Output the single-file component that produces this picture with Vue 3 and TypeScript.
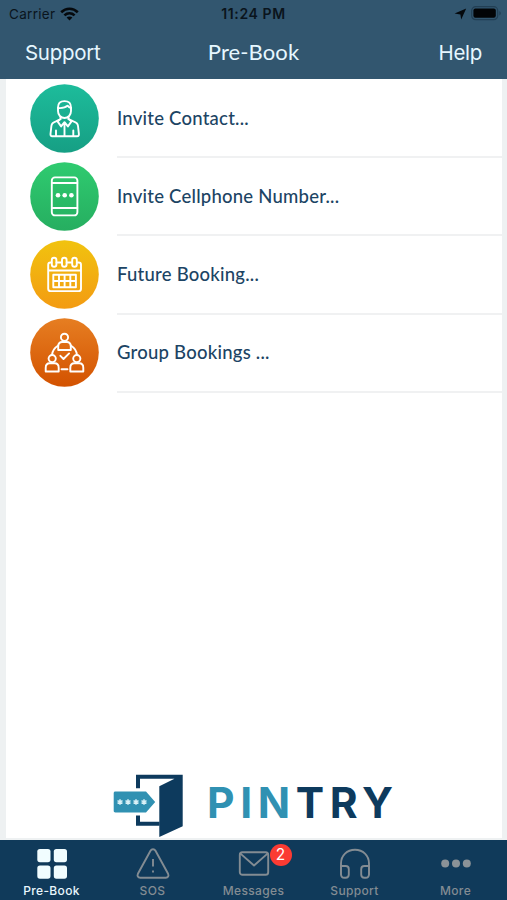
<script setup lang="ts">
interface MenuItem {
  id: string
  label: string
  from: string
  to: string
}

interface Tab {
  id: string
  label: string
  badge?: number
}

const items: MenuItem[] = [
  { id: 'contact', label: 'Invite Contact...', from: '#1dbc9b', to: '#169f84' },
  { id: 'phone', label: 'Invite Cellphone Number...', from: '#2fcb70', to: '#26ae60' },
  { id: 'calendar', label: 'Future Booking...', from: '#f1c30f', to: '#f39b12' },
  { id: 'group', label: 'Group Bookings ...', from: '#e67e22', to: '#d35200' },
]

const tabs: Tab[] = [
  { id: 'prebook', label: 'Pre-Book' },
  { id: 'sos', label: 'SOS' },
  { id: 'messages', label: 'Messages', badge: 2 },
  { id: 'support', label: 'Support' },
  { id: 'more', label: 'More' },
]

const active = 'prebook'
const stars = [7, 15, 23, 31]
</script>

<template>
  <div class="screen">
    <header class="top">
      <div class="status">
        <div class="carrier">
          <span>Carrier</span>
          <svg width="19" height="14" viewBox="0 0 19 14">
            <g fill="none" stroke="#05090d" stroke-width="2.6">
              <path d="M1.2 5.2C6 .6 13 .6 17.8 5.2" />
              <path d="M4.4 8.4c3-2.8 7.2-2.8 10.2 0" />
            </g>
            <path d="M9.5 13.6 6.6 10.6c1.6-1.5 4.2-1.5 5.8 0z" fill="#05090d" />
          </svg>
        </div>
        <div class="clock">11:24 PM</div>
        <div class="indicators">
          <svg width="13" height="12" viewBox="0 0 13 12">
            <path d="M12.2.4 7.2 11.6 6.4 6.4.6 5.6z" fill="#05090d" />
          </svg>
          <svg width="31" height="15" viewBox="0 0 31 15">
            <rect x=".7" y=".7" width="26" height="13" rx="4" fill="none" stroke="#223f54" stroke-width="1.2" />
            <rect x="2.4" y="2.6" width="22.4" height="9.2" rx="2" fill="#020406" />
            <path d="M28.4 5c1.9.8 1.9 3.600 0 4.400z" fill="#223f54" />
          </svg>
        </div>
      </div>
      <nav class="navbar">
        <span class="nav-left">Support</span>
        <span class="nav-title">Pre-Book</span>
        <span class="nav-right">Help</span>
      </nav>
    </header>

    <main class="sheet">
      <ul class="menu">
        <li v-for="item in items" :key="item.id" class="row">
          <svg class="row-icon" width="69" height="69" viewBox="0 0 69 69">
            <defs>
              <linearGradient :id="`fill-${item.id}`" x1="0" y1="0" x2="0" y2="1">
                <stop offset="0" :stop-color="item.from" />
                <stop offset="1" :stop-color="item.to" />
              </linearGradient>
            </defs>
            <circle cx="34.5" cy="34.5" r="34.3" :fill="`url(#fill-${item.id})`" />
            <g v-if="item.id === 'contact'" class="line">
              <path d="M28 23.500c0-4 2.600-6.400 6.500-6.400s6.500 2.400 6.500 6.400v3.500c0 4-2.800 7-6.500 7s-6.500-3-6.500-7z" />
              <path d="M28 24c4 .3 7.500-.3 9.500-2.300 1 1.300 2 2 3.500 2.300" />
              <path d="M30.500 33v2L26 37.400c-3 .9-4.300 2-4.600 4.600l-.9 8c-.1 1.400.4 2.200 1.800 2.200h24.800c1.400 0 1.900-.8 1.800-2.200L48 42c-.3-2.600-1.600-3.700-4.600-4.600L38.500 35v-2" />
              <path d="M30.500 35l-3 2.400 3.600 5 3.400-4.200 3.400 4.200 3.600-5-3-2.400M34.500 38.500v13.500M26 46.500v5.500M43.300 46.500v5.500" />
            </g>
            <g v-else-if="item.id === 'phone'">
              <g class="line">
                <rect x="21.8" y="15.4" width="25.6" height="38" rx="3.2" />
                <path d="M22 21h25.300M22 46h25.300" />
              </g>
              <circle cx="28" cy="33.3" r="2.3" fill="#fff" />
              <circle cx="34.7" cy="33.3" r="2.3" fill="#fff" />
              <circle cx="41.4" cy="33.3" r="2.3" fill="#fff" />
            </g>
            <g v-else-if="item.id === 'calendar'" class="line">
              <path d="M21.500 22.500h-1c-1.600 0-2.300.8-2.300 2.200v24c0 1.600.8 2.400 2.400 2.400h28c1.600 0 2.400-.8 2.400-2.400v-24c0-1.400-.7-2.200-2.300-2.200h-1M26.500 22.500h5M36.700 22.500h5M18.400 30.500h32.400" />
              <rect x="21.8" y="17.8" width="4.600" height="9" rx="2.3" />
              <rect x="32" y="17.8" width="4.600" height="9" rx="2.3" />
              <rect x="42.2" y="17.8" width="4.600" height="9" rx="2.3" />
              <path d="M23.300 34.800h22.600v12.400H23.300zM23.300 41h22.600M29 34.800v12.400M34.600 34.800v12.400M40.300 34.800v12.400" />
            </g>
            <g v-else class="line">
              <circle cx="34.5" cy="19.3" r="3.6" />
              <path d="M28.200 32v-3.400c0-3 1.600-4.600 4-4.600h4.600c2.400 0 4 1.600 4 4.600V32z" />
              <circle cx="22.2" cy="40.6" r="3.6" />
              <path d="M15.700 53.500v-3.600c0-3 1.600-4.600 4-4.600h5c2.400 0 4 1.600 4 4.600v3.600z" />
              <circle cx="46.8" cy="40.6" r="3.6" />
              <path d="M40.300 53.500v-3.600c0-3 1.600-4.600 4-4.600h5c2.400 0 4 1.600 4 4.600v3.600z" />
              <path d="M28.200 27.500c-3.600 2.300-5.800 5.600-6.200 9.300M40.800 27.500c3.600 2.300 5.800 5.600 6.200 9.300M31.500 51.300h6" />
              <path d="M30.400 37.800l3.100 3.200 5.600-5.600" />
            </g>
          </svg>
          <div class="row-body">{{ item.label }}</div>
        </li>
      </ul>

      <div class="brand">
        <svg width="71" height="64" viewBox="0 0 71 64">
          <path d="M23 14.300V.7h46.700v51.600L46.300 63V12.300L61.500 4.700H27v9.600z" fill="#0d3a5d" />
          <path d="M23 41.500h4v6.300h19.600v4H23z" fill="#0d3a5d" />
          <path d="M2.400 17.600H33l9.200 10.400L33 38.400H2.400c-1.100 0-1.700-.6-1.700-1.700V19.300c0-1.100.6-1.700 1.700-1.700z" fill="#3091b2" />
          <g stroke="#d9f1f7" stroke-width="1.5">
            <path v-for="x in stars" :key="x" :d="`M${x} 25.200v5.600M${x - 2.5} 26.600l5 2.800M${x - 2.5} 29.400l5-2.800`" />
          </g>
        </svg>
        <div class="wordmark"><span class="pin">PIN</span><span class="try">TRY</span></div>
      </div>
    </main>

    <footer class="tabbar">
      <div v-for="tab in tabs" :key="tab.id" :class="['tab', { active: tab.id === active }]">
        <div class="tab-icon">
          <svg v-if="tab.id === 'prebook'" width="32" height="32" viewBox="0 0 32 32" fill="#f1fdff">
            <rect x="1.300" y="1" width="13.2" height="13.2" rx="2.6" />
            <rect x="17.8" y="1" width="13.2" height="13.2" rx="2.6" />
            <rect x="1.300" y="17.5" width="13.2" height="13.2" rx="2.6" />
            <rect x="17.8" y="17.5" width="13.2" height="13.2" rx="2.6" />
          </svg>
          <svg v-else-if="tab.id === 'sos'" class="glyph" width="34" height="32" viewBox="0 0 34 32">
            <path d="M14.500 2.800c1.200-2 3.800-2 5 0l12.600 23c1 2-.1 4-2.300 4H4.200c-2.200 0-3.300-2-2.300-4z" />
            <path d="M17 11v7.500M17 22.400v2" stroke-linecap="butt" />
          </svg>
          <svg v-else-if="tab.id === 'messages'" class="glyph" width="32" height="32" viewBox="0 0 32 32">
            <rect x="1.8" y="4.300" width="28.4" height="22.5" rx="2.6" />
            <path d="M2.500 5.600 16 17.500 29.500 5.600" />
          </svg>
          <svg v-else-if="tab.id === 'support'" class="glyph" width="32" height="32" viewBox="0 0 32 32">
            <path d="M2 26V15.500C2 7.500 8 1.800 16 1.800S30 7.500 30 15.500V26" />
            <path d="M2 18h4.600c2 0 3.200 1.200 3.200 3.200v5.400c0 2-1 3.200-3.200 3.200h-1.200C3.200 29.800 2 28.400 2 26zM30 18h-4.600c-2 0-3.200 1.200-3.200 3.200v5.400c0 2 1 3.200 3.200 3.200h1.200c2.200 0 3.400-1.400 3.400-3.800z" />
          </svg>
          <svg v-else width="32" height="32" viewBox="0 0 32 32" fill="#8b9297">
            <circle cx="5.2" cy="15.5" r="4" />
            <circle cx="16" cy="15.5" r="4" />
            <circle cx="26.8" cy="15.5" r="4" />
          </svg>
          <span v-if="tab.badge" class="badge">{{ tab.badge }}</span>
        </div>
        <span class="tab-label">{{ tab.label }}</span>
      </div>
    </footer>
  </div>
</template>

<style>
body {
  margin: 0;
}
</style>

<style scoped>
.screen {
  width: 507px;
  height: 900px;
  display: flex;
  flex-direction: column;
  overflow: hidden;
  background: #eef1f2;
  font-family: Inter, 'Liberation Sans', sans-serif;
}

.top {
  height: 79px;
  flex: none;
  background: #32566f;
}

.status {
  display: grid;
  grid-template-columns: 1fr auto 1fr;
  align-items: center;
  height: 27px;
  padding: 0 5px 0 9px;
  color: #0a141c;
  font-size: 13.5px;
}

.carrier {
  display: flex;
  align-items: center;
  gap: 5px;
  letter-spacing: 0.3px;
}

.clock {
  margin-right: 4px;
  font-size: 14px;
  font-weight: 600;
  letter-spacing: 0.6px;
}

.indicators {
  display: flex;
  align-items: center;
  justify-content: flex-end;
  gap: 4px;
}

.navbar {
  display: grid;
  grid-template-columns: 1fr auto 1fr;
  align-items: center;
  height: 51px;
  padding: 0 25px;
  color: #e6f7ff;
  font-size: 20.5px;
  letter-spacing: -0.3px;
}

.nav-title {
  margin-top: -2px;
  font-family: Lato, sans-serif;
  font-size: 22px;
  letter-spacing: 0.1px;
}

.nav-right {
  text-align: right;
}

.sheet {
  flex: 1;
  display: flex;
  flex-direction: column;
  justify-content: space-between;
  margin: 0 5px 2px 6px;
  background: #fff;
}

.menu {
  margin: 0;
  padding: 0;
  list-style: none;
}

.row {
  display: flex;
  align-items: center;
  gap: 18px;
  height: 78.2px;
  padding-left: 24px;
}

.row-icon {
  flex: none;
}

.row-body {
  flex: 1;
  align-self: stretch;
  display: flex;
  align-items: center;
  margin-bottom: -1px;
  border-bottom: 2px solid #f0f1f2;
  box-sizing: border-box;
  color: #1c4464;
  font-family: Lato, sans-serif;
  font-size: 18.5px;
  font-weight: 500;
  letter-spacing: 0.23px;
}

.line {
  fill: none;
  stroke: #fff;
  stroke-width: 1.9;
  stroke-linejoin: round;
  stroke-linecap: round;
}

.brand {
  display: flex;
  align-items: flex-start;
  gap: 23px;
  padding-left: 107px;
}

.wordmark {
  padding-top: 3px;
  font-weight: 700;
  font-size: 42.5px;
  line-height: 52px;
  letter-spacing: 5.6px;
}

.pin {
  color: #3091b2;
}

.try {
  color: #0d3a5d;
}

.tabbar {
  flex: none;
  display: grid;
  grid-template-columns: repeat(5, 1fr);
  height: 60px;
  padding: 0 1px;
  background: #103a5a;
}

.tab {
  display: flex;
  flex-direction: column;
  align-items: center;
  padding-top: 8px;
  color: #838c93;
}

.tab.active {
  color: #e9f7fd;
}

.tab-icon {
  position: relative;
  height: 32px;
}

.glyph {
  fill: none;
  stroke: #838c93;
  stroke-width: 1.9;
  stroke-linejoin: round;
  stroke-linecap: round;
}

.tab-label {
  margin-top: 3px;
  font-size: 12px;
  font-weight: 500;
  line-height: 16px;
  letter-spacing: 0.35px;
}

.badge {
  position: absolute;
  top: -4px;
  left: 32px;
  width: 22px;
  height: 22px;
  border-radius: 50%;
  background: #fb3b33;
  color: #fff;
  font-size: 15.5px;
  line-height: 22px;
  text-align: center;
}
</style>
